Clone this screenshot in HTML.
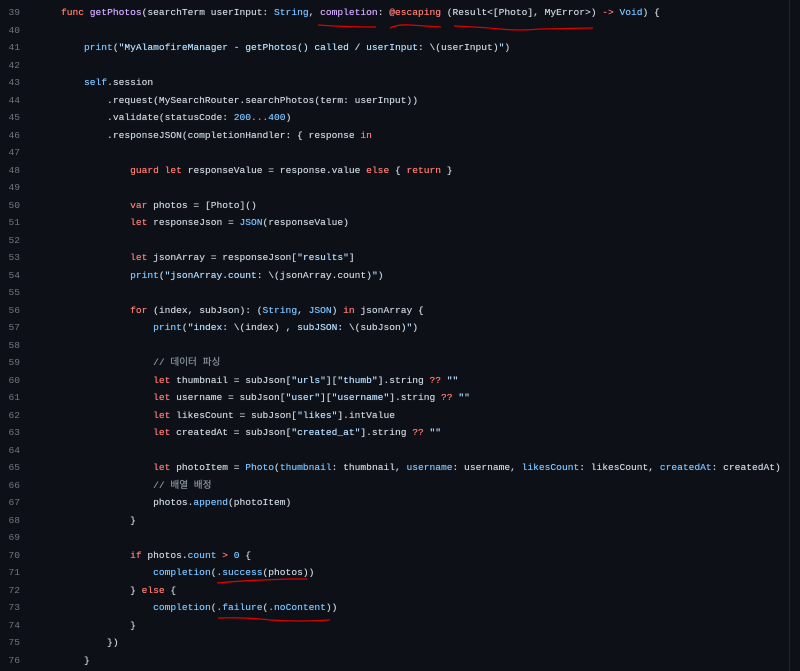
<!DOCTYPE html>
<html><head><meta charset="utf-8"><style>
html,body{margin:0;padding:0;background:#0d1117;width:800px;height:671px;overflow:hidden}
.c{position:absolute;left:0;top:4px;font-family:"Liberation Mono","Noto Sans CJK KR",monospace;font-size:9.6px;line-height:17.5px;color:#c9d1d9}
.l{height:17.5px;position:relative}
.n{position:absolute;left:0;width:20px;text-align:right;color:#6e7681}
.t{position:absolute;left:61px;white-space:pre;text-shadow:0 0 0.4px currentColor}
.k{color:#ff7b72}.f{color:#d2a8ff}.b{color:#79c0ff}.s{color:#b4dcff}.m{color:#8b949e}
.bar{position:absolute;left:789px;top:0;width:1px;height:671px;background:#21262d}
</style></head><body>
<div class="bar"></div>
<div class="c"><div class="l"><span class="n">39</span><span class="t"><span class="k">func</span> <span class="f">getPhotos</span>(searchTerm userInput: <span class="b">String</span>, <span class="f">completion</span>: <span class="k">@escaping</span> (Result&lt;[Photo], MyError&gt;) <span class="k">-&gt;</span> <span class="b">Void</span>) {</span></div><div class="l"><span class="n">40</span></div><div class="l"><span class="n">41</span><span class="t">    <span class="b">print</span>(<span class="s">"MyAlamofireManager - getPhotos() called / userInput: </span>\(userInput)<span class="s">"</span>)</span></div><div class="l"><span class="n">42</span></div><div class="l"><span class="n">43</span><span class="t">    <span class="b">self</span>.session</span></div><div class="l"><span class="n">44</span><span class="t">        .request(MySearchRouter.searchPhotos(term: userInput))</span></div><div class="l"><span class="n">45</span><span class="t">        .validate(statusCode: <span class="b">200</span><span class="k">...</span><span class="b">400</span>)</span></div><div class="l"><span class="n">46</span><span class="t">        .responseJSON(completionHandler: { response <span class="k">in</span></span></div><div class="l"><span class="n">47</span></div><div class="l"><span class="n">48</span><span class="t">            <span class="k">guard</span> <span class="k">let</span> responseValue = response.value <span class="k">else</span> { <span class="k">return</span> }</span></div><div class="l"><span class="n">49</span></div><div class="l"><span class="n">50</span><span class="t">            <span class="k">var</span> photos = [Photo]()</span></div><div class="l"><span class="n">51</span><span class="t">            <span class="k">let</span> responseJson = <span class="b">JSON</span>(responseValue)</span></div><div class="l"><span class="n">52</span></div><div class="l"><span class="n">53</span><span class="t">            <span class="k">let</span> jsonArray = responseJson[<span class="s">"results"</span>]</span></div><div class="l"><span class="n">54</span><span class="t">            <span class="b">print</span>(<span class="s">"jsonArray.count: </span>\(jsonArray.count)<span class="s">"</span>)</span></div><div class="l"><span class="n">55</span></div><div class="l"><span class="n">56</span><span class="t">            <span class="k">for</span> (index, subJson): (<span class="b">String</span>, <span class="b">JSON</span>) <span class="k">in</span> jsonArray {</span></div><div class="l"><span class="n">57</span><span class="t">                <span class="b">print</span>(<span class="s">"index: </span>\(index)<span class="s"> , subJSON: </span>\(subJson)<span class="s">"</span>)</span></div><div class="l"><span class="n">58</span></div><div class="l"><span class="n">59</span><span class="t">                <span class="m">// 데이터 파싱</span></span></div><div class="l"><span class="n">60</span><span class="t">                <span class="k">let</span> thumbnail = subJson[<span class="s">"urls"</span>][<span class="s">"thumb"</span>].string <span class="k">??</span> <span class="s">""</span></span></div><div class="l"><span class="n">61</span><span class="t">                <span class="k">let</span> username = subJson[<span class="s">"user"</span>][<span class="s">"username"</span>].string <span class="k">??</span> <span class="s">""</span></span></div><div class="l"><span class="n">62</span><span class="t">                <span class="k">let</span> likesCount = subJson[<span class="s">"likes"</span>].intValue</span></div><div class="l"><span class="n">63</span><span class="t">                <span class="k">let</span> createdAt = subJson[<span class="s">"created_at"</span>].string <span class="k">??</span> <span class="s">""</span></span></div><div class="l"><span class="n">64</span></div><div class="l"><span class="n">65</span><span class="t">                <span class="k">let</span> photoItem = <span class="b">Photo</span>(<span class="b">thumbnail</span>: thumbnail, <span class="b">username</span>: username, <span class="b">likesCount</span>: likesCount, <span class="b">createdAt</span>: createdAt)</span></div><div class="l"><span class="n">66</span><span class="t">                <span class="m">// 배열 배정</span></span></div><div class="l"><span class="n">67</span><span class="t">                photos.<span class="b">append</span>(photoItem)</span></div><div class="l"><span class="n">68</span><span class="t">            }</span></div><div class="l"><span class="n">69</span></div><div class="l"><span class="n">70</span><span class="t">            <span class="k">if</span> photos.<span class="b">count</span> <span class="k">&gt;</span> <span class="b">0</span> {</span></div><div class="l"><span class="n">71</span><span class="t">                <span class="b">completion</span>(<span class="b">.success</span>(photos))</span></div><div class="l"><span class="n">72</span><span class="t">            } <span class="k">else</span> {</span></div><div class="l"><span class="n">73</span><span class="t">                <span class="b">completion</span>(<span class="b">.failure</span>(<span class="b">.noContent</span>))</span></div><div class="l"><span class="n">74</span><span class="t">            }</span></div><div class="l"><span class="n">75</span><span class="t">        })</span></div><div class="l"><span class="n">76</span><span class="t">    }</span></div></div>
<svg width="800" height="671" style="position:absolute;left:0;top:0" fill="none" stroke="#e00000" stroke-width="1.3">
<path d="M318 25 Q345 27 376 27"/>
<path d="M390 28 Q398 24 410 25 L441 27"/>
<path d="M454 26 Q480 27 500 29 Q520 31 540 29 L593 28"/>
<path d="M217 583 Q250 580 290 579 L307 579"/>
<path d="M218 618 Q245 617 270 620 Q300 622 330 620"/>
</svg>
</body></html>
